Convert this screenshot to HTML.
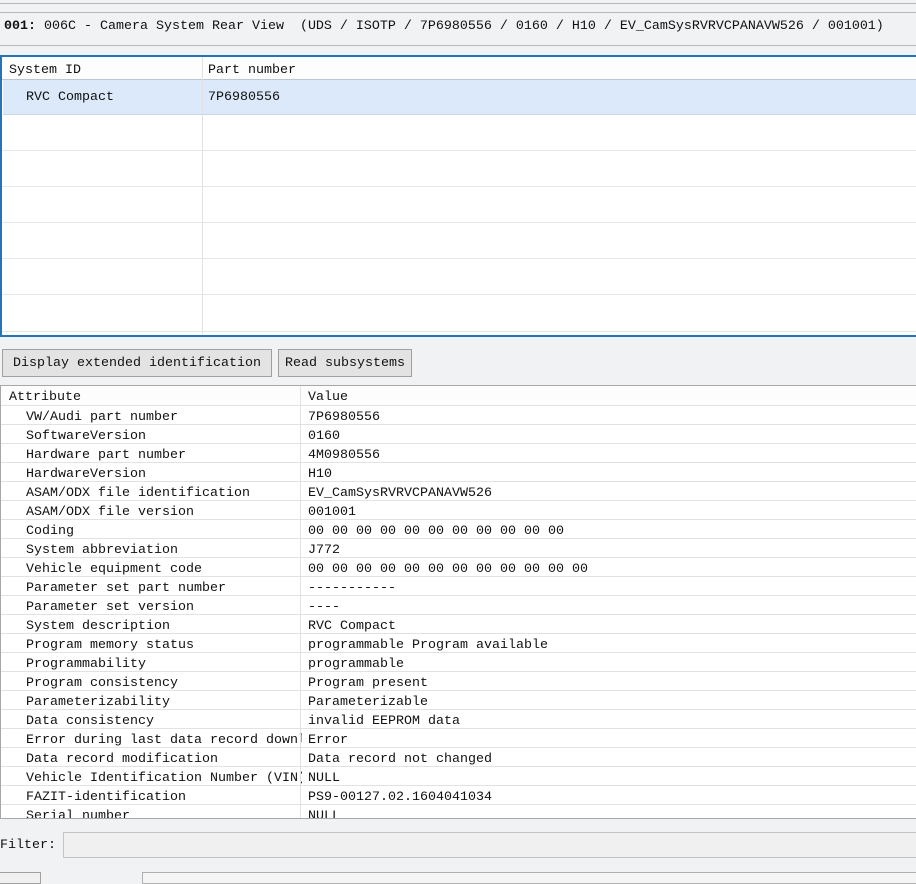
<!DOCTYPE html>
<html><head><meta charset="utf-8"><style>
*{margin:0;padding:0;box-sizing:border-box}
body{width:916px;height:880px;background:#f1f2f3;font-family:"Liberation Mono","Noto Sans CJK SC",monospace;font-size:13.33px;color:#111;position:relative;overflow:hidden}
.a{position:absolute;white-space:nowrap}
.t{line-height:19px}
.r{height:19px;border-bottom:1px solid #e2e2e2;position:relative;line-height:19px}
.r span{position:absolute;top:2px}
.r span:first-child{left:25px;width:276px;overflow:hidden}
.r span+span{left:307px}
</style></head><body>
<div class="a" style="left:0;top:3px;width:916px;height:1px;background:#b8b8b8"></div>
<div class="a" style="left:0;top:12px;width:916px;height:1px;background:#b8b8b8"></div>
<div class="a" style="left:0;top:45px;width:916px;height:1px;background:#b8b8b8"></div>
<div class="a t" style="left:4px;top:17px;white-space:pre"><b>001:</b> 006C - Camera System Rear View  (UDS / ISOTP / 7P6980556 / 0160 / H10 / EV_CamSysRVRVCPANAVW526 / 001001)</div>

<div class="a" style="left:0;top:55px;width:930px;height:282px;border:2px solid #2375b8;background:#fff"></div>
<div class="a" style="left:2px;top:57px;width:914px;height:23px;background:#fdfdfd;border-bottom:1px solid #bcc6d0"></div>
<div class="a" style="left:9px;top:62px;line-height:18px">System ID</div>
<div class="a" style="left:208px;top:62px;line-height:18px">Part number</div>
<div class="a" style="left:3px;top:80px;width:913px;height:35px;background:#dce9fa;border-bottom:1px solid #c8d6e6"></div>
<div class="a" style="left:26px;top:89px;line-height:18px">RVC Compact</div>
<div class="a" style="left:208px;top:89px;line-height:18px">7P6980556</div>
<div class="a" style="left:202px;top:57px;width:1px;height:277px;background:#e0e0e0"></div>
<div class="a" style="left:2px;top:150px;width:914px;height:1px;background:#e6e6e6"></div>
<div class="a" style="left:2px;top:186px;width:914px;height:1px;background:#e6e6e6"></div>
<div class="a" style="left:2px;top:222px;width:914px;height:1px;background:#e6e6e6"></div>
<div class="a" style="left:2px;top:258px;width:914px;height:1px;background:#e6e6e6"></div>
<div class="a" style="left:2px;top:294px;width:914px;height:1px;background:#e6e6e6"></div>
<div class="a" style="left:2px;top:331px;width:914px;height:1px;background:#e6e6e6"></div>

<div class="a" style="left:2px;top:349px;width:270px;height:28px;border:1px solid #a0a0a0;background:#e3e3e3;line-height:28px;padding-left:10px">Display extended identification</div>
<div class="a" style="left:278px;top:349px;width:134px;height:28px;border:1px solid #a0a0a0;background:#e3e3e3;line-height:28px;padding-left:6px">Read subsystems</div>

<div class="a" style="left:0;top:385px;width:930px;height:434px;border:1px solid #a8a8a8;background:#fff"></div>
<div class="a" style="left:1px;top:386px;width:916px">
<div style="height:20px;background:#fdfdfd;border-bottom:1px solid #e2e2e2;padding-left:8px;position:relative;line-height:19px;padding-top:2px">Attribute<span style="position:absolute;left:307px;top:2px">Value</span></div>
</div>
<div class="a" style="left:1px;top:406px;width:916px;height:412px;overflow:hidden">
<div class="r"><span>VW/Audi part number</span><span>7P6980556</span></div>
<div class="r"><span>SoftwareVersion</span><span>0160</span></div>
<div class="r"><span>Hardware part number</span><span>4M0980556</span></div>
<div class="r"><span>HardwareVersion</span><span>H10</span></div>
<div class="r"><span>ASAM/ODX file identification</span><span>EV_CamSysRVRVCPANAVW526</span></div>
<div class="r"><span>ASAM/ODX file version</span><span>001001</span></div>
<div class="r"><span>Coding</span><span>00 00 00 00 00 00 00 00 00 00 00</span></div>
<div class="r"><span>System abbreviation</span><span>J772</span></div>
<div class="r"><span>Vehicle equipment code</span><span>00 00 00 00 00 00 00 00 00 00 00 00</span></div>
<div class="r"><span>Parameter set part number</span><span>-----------</span></div>
<div class="r"><span>Parameter set version</span><span>----</span></div>
<div class="r"><span>System description</span><span>RVC Compact</span></div>
<div class="r"><span>Program memory status</span><span>programmable Program available</span></div>
<div class="r"><span>Programmability</span><span>programmable</span></div>
<div class="r"><span>Program consistency</span><span>Program present</span></div>
<div class="r"><span>Parameterizability</span><span>Parameterizable</span></div>
<div class="r"><span>Data consistency</span><span>invalid EEPROM data</span></div>
<div class="r"><span>Error during last data record download</span><span>Error</span></div>
<div class="r"><span>Data record modification</span><span>Data record not changed</span></div>
<div class="r"><span>Vehicle Identification Number (VIN)</span><span>NULL</span></div>
<div class="r"><span>FAZIT-identification</span><span>PS9-00127.02.1604041034</span></div>
<div class="r"><span>Serial number</span><span>NULL</span></div>
</div>
<div class="a" style="left:300px;top:386px;width:1px;height:432px;background:#e2e2e2"></div>

<div class="a" style="left:0;top:836px;line-height:19px">Filter:</div>
<div class="a" style="left:63px;top:832px;width:860px;height:26px;border:1px solid #c4c4c4;background:#f0f0f0"></div>
<div class="a" style="left:-2px;top:872px;width:43px;height:12px;border:1px solid #a0a0a0;background:#f0f0f0"></div>
<div class="a" style="left:142px;top:872px;width:780px;height:12px;border:1px solid #b0b0b0;background:#f5f5f5"></div>
</body></html>
